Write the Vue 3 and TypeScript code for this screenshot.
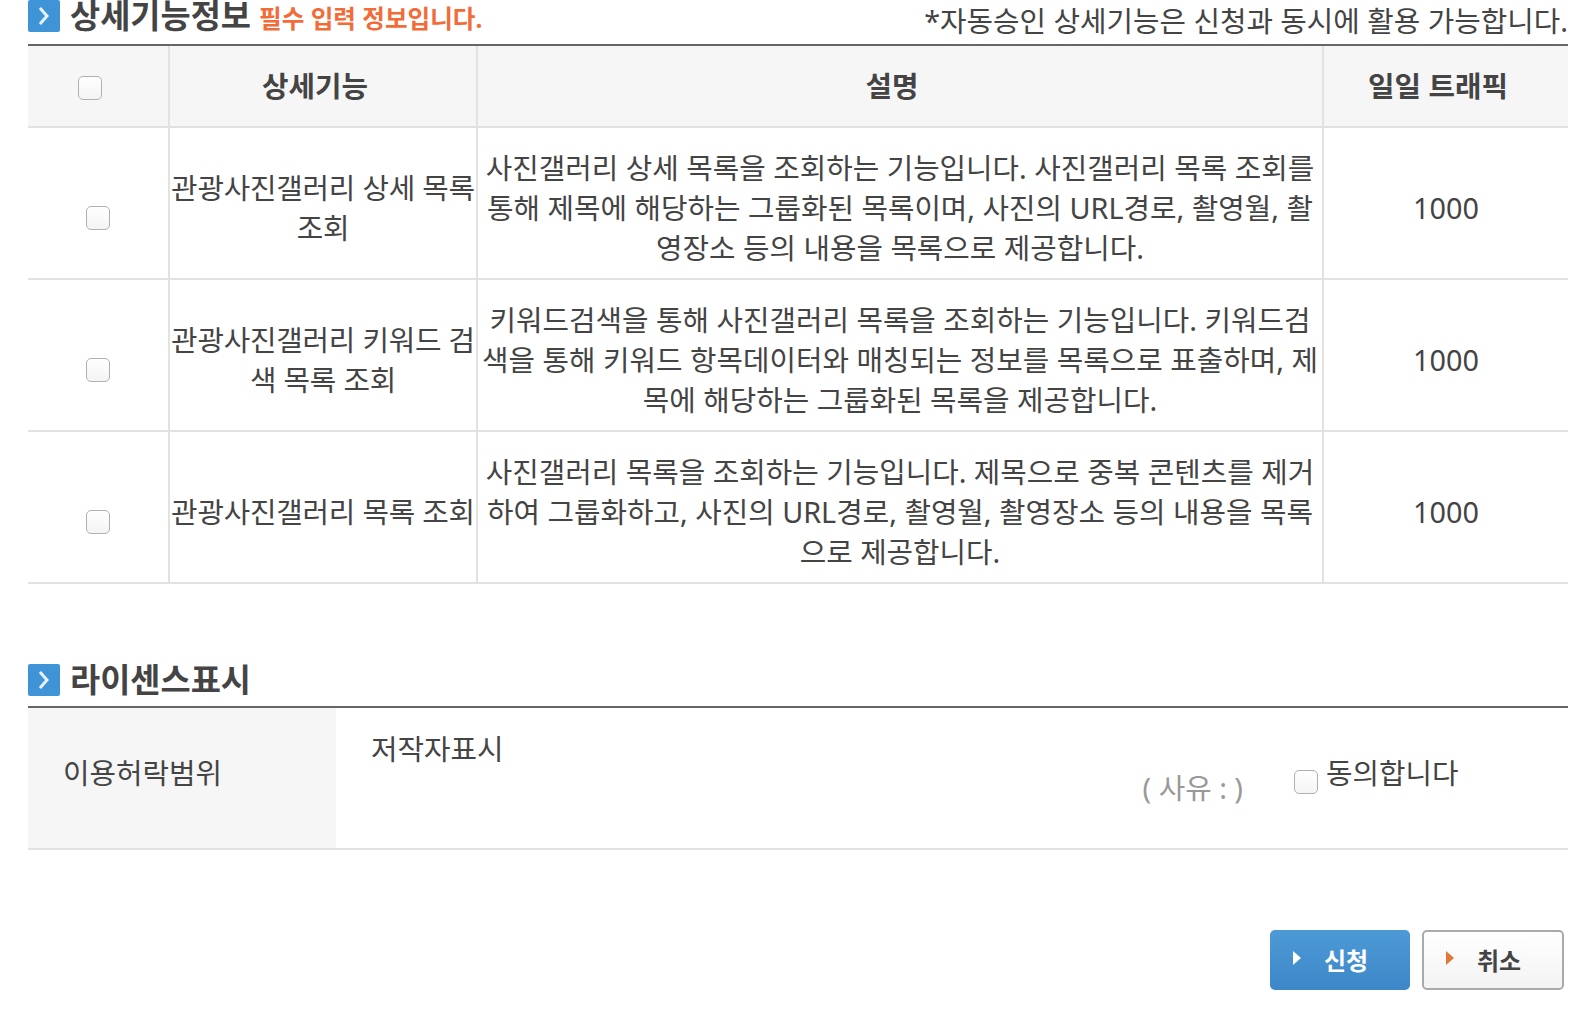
<script setup lang="ts">
interface Feature {
  name: string;
  description: string;
  traffic: number;
}

const features: Feature[] = [
  {
    name: "관광사진갤러리 상세 목록 조회",
    description:
      "사진갤러리 상세 목록을 조회하는 기능입니다. 사진갤러리 목록 조회를 통해 제목에 해당하는 그룹화된 목록이며, 사진의 URL경로, 촬영월, 촬영장소 등의 내용을 목록으로 제공합니다.",
    traffic: 1000,
  },
  {
    name: "관광사진갤러리 키워드 검색 목록 조회",
    description:
      "키워드검색을 통해 사진갤러리 목록을 조회하는 기능입니다. 키워드검색을 통해 키워드 항목데이터와 매칭되는 정보를 목록으로 표출하며, 제목에 해당하는 그룹화된 목록을 제공합니다.",
    traffic: 1000,
  },
  {
    name: "관광사진갤러리 목록 조회",
    description:
      "사진갤러리 목록을 조회하는 기능입니다. 제목으로 중복 콘텐츠를 제거하여 그룹화하고, 사진의 URL경로, 촬영월, 촬영장소 등의 내용을 목록으로 제공합니다.",
    traffic: 1000,
  },
];
</script>

<template>
  <div class="page">
    <div class="section-head">
      <h2 class="section-title">
        <span class="section-icon" aria-hidden="true">
          <svg viewBox="0 0 32 32" width="32" height="32">
            <path d="M12 8l7 8-7 8" fill="none" stroke="#e8f3fb" stroke-width="3" />
          </svg>
        </span>
        <span>상세기능정보</span>
        <em class="required">필수 입력 정보입니다.</em>
      </h2>
      <p class="section-note">*자동승인 상세기능은 신청과 동시에 활용 가능합니다.</p>
    </div>

    <table class="feature-table">
      <colgroup>
        <col class="col-check" />
        <col class="col-name" />
        <col />
        <col class="col-traffic" />
      </colgroup>
      <thead>
        <tr>
          <th class="th-check"><input type="checkbox" class="check" aria-label="전체 선택" /></th>
          <th>상세기능</th>
          <th>설명</th>
          <th>일일 트래픽</th>
        </tr>
      </thead>
      <tbody>
        <tr v-for="feature in features" :key="feature.name">
          <td class="td-check"><input type="checkbox" class="check" :aria-label="feature.name" /></td>
          <td class="td-name">{{ feature.name }}</td>
          <td class="td-desc">{{ feature.description }}</td>
          <td>{{ feature.traffic }}</td>
        </tr>
      </tbody>
    </table>

    <div class="section-head section-head--license">
      <h2 class="section-title">
        <span class="section-icon" aria-hidden="true">
          <svg viewBox="0 0 32 32" width="32" height="32">
            <path d="M12 8l7 8-7 8" fill="none" stroke="#e8f3fb" stroke-width="3" />
          </svg>
        </span>
        <span>라이센스표시</span>
      </h2>
    </div>

    <div class="license-row">
      <div class="license-label">이용허락범위</div>
      <div class="license-value">
        <span class="license-name">저작자표시</span>
        <span class="license-reason">( 사유 : )</span>
        <label class="license-agree">
          <input type="checkbox" class="check" />
          <span>동의합니다</span>
        </label>
      </div>
    </div>

    <div class="actions">
      <button type="button" class="btn btn--primary">신청</button>
      <button type="button" class="btn btn--ghost">취소</button>
    </div>
  </div>
</template>

<style scoped>
.page {
  width: 1540px;
  margin-left: 28px;
  color: #444;
  font-family: "Noto Sans", "Noto Sans CJK KR", sans-serif;
  font-size: 28.8px;
  line-height: 40px;
}

.section-head {
  display: flex;
  justify-content: space-between;
  align-items: flex-start;
  height: 44px;
  border-bottom: 2px solid #666;
  box-sizing: content-box;
}

.section-head--license {
  margin-top: 80px;
  height: 42px;
}

.section-title {
  display: flex;
  align-items: center;
  height: 32px;
  margin: 0;
  font-size: 32.8px;
  font-weight: 700;
  line-height: 32px;
  white-space: nowrap;
}

.section-icon {
  display: block;
  width: 32px;
  height: 32px;
  margin-right: 10px;
  background: #3f94d8;
  border-radius: 2px;
}

.section-icon svg {
  display: block;
}

.required {
  margin: 6px 0 0 8px;
  color: #f26b38;
  font-size: 24.6px;
  font-style: normal;
  font-weight: 700;
}

.section-note {
  margin: 1px 0 0;
  height: 43px;
}

.feature-table {
  width: 100%;
  border-collapse: collapse;
  table-layout: fixed;
}

.col-check {
  width: 141px;
}

.col-name {
  width: 308px;
}

.col-traffic {
  width: 245px;
}

.feature-table th {
  height: 80px;
  padding: 0 16px 0 0;
  background: #f6f6f6;
  font-weight: 700;
  border-bottom: 2px solid #e2e2e2;
  border-left: 2px solid #e2e2e2;
}

.feature-table td {
  height: 152px;
  padding: 10px 0 0;
  box-sizing: border-box;
  text-align: center;
  border-bottom: 2px solid #e2e2e2;
  border-left: 2px solid #e2e2e2;
}

.feature-table th:first-child,
.feature-table td:first-child {
  border-left: 0;
}

.feature-table .td-name {
  letter-spacing: -0.2px;
}

.feature-table .td-desc {
  padding: 10px 4px 0;
}

.check {
  appearance: none;
  display: block;
  width: 24px;
  height: 24px;
  margin: 0;
  background: linear-gradient(180deg, #fff, #f4f4f4);
  border: 1px solid #b0b0b0;
  border-radius: 5px;
}

.th-check .check {
  margin: 4px auto 0;
}

.td-check .check {
  margin: 20px auto 0;
}

.license-row {
  display: flex;
  height: 140px;
  border-bottom: 2px solid #e2e2e2;
}

.license-label {
  display: flex;
  align-items: center;
  width: 308px;
  padding: 0 0 10px 35px;
  box-sizing: border-box;
  background: #f6f6f6;
}

.license-value {
  flex: 1;
  display: flex;
  padding: 21px 0 0 35px;
}

.license-name {
  flex: 1;
}

.license-reason {
  margin: 39px 51px 0 0;
  color: #999;
}

.license-agree {
  display: flex;
  width: 274px;
  gap: 8px;
  margin-top: 24px;
}

.license-agree .check {
  margin-top: 17px;
}

.actions {
  display: flex;
  justify-content: flex-end;
  gap: 12px;
  margin: 80px 4px 0 0;
}

.btn {
  position: relative;
  width: 140px;
  height: 60px;
  padding: 0 0 2px 12px;
  font-family: inherit;
  font-size: 24px;
  font-weight: 700;
  border-radius: 5px;
  box-sizing: border-box;
}

.btn::before {
  content: "";
  position: absolute;
  left: 23px;
  top: 21px;
  border-left: 8px solid #fff;
  border-top: 7px solid transparent;
  border-bottom: 7px solid transparent;
}

.btn--primary {
  color: #fff;
  background: linear-gradient(180deg, #4d9ad6, #3d87c8);
  border: 0;
}

.btn--ghost {
  width: 142px;
  color: #444;
  background: linear-gradient(180deg, #fff, #f3f3f3);
  border: 2px solid #aaa;
}

.btn--ghost::before {
  border-left-color: #e2773a;
  left: 22px;
  top: 19px;
}
</style>

<style>
html,
body {
  overflow: hidden;
  background: #fff;
}
</style>
